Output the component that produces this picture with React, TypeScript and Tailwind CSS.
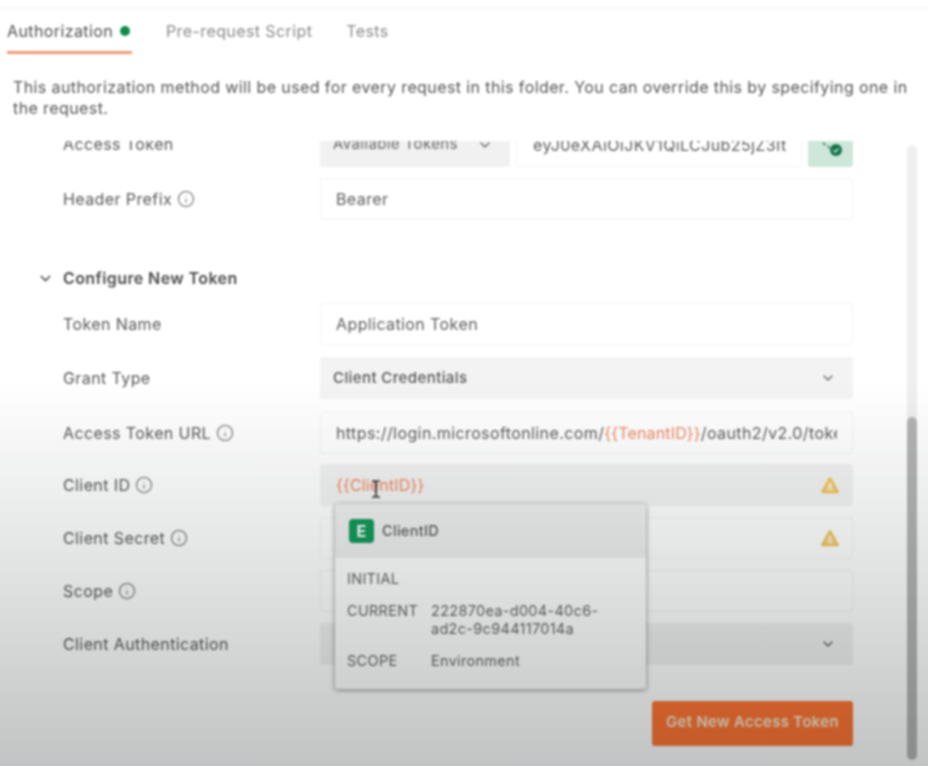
import { ChevronDown, Info } from "lucide-react";
import type { ReactNode } from "react";

const field = "h-full flex items-center rounded-[3px] border border-[#f3f3f3] pl-[15px] pr-4 text-[#5c5c5c] min-w-0";

const InfoIcon = () => <Info size={18} strokeWidth={1.4} className="text-[#666] shrink-0" />;

const Warn = () => (
  <svg width="20" height="19" viewBox="0 0 20 19" className="shrink-0">
    <path d="M10 2.5 L17.5 16 H2.5 Z" fill="#f0dc9c" stroke="#f2c158" strokeWidth="2.6" strokeLinejoin="round" />
    <rect x="9.1" y="6.5" width="1.8" height="5" fill="#fff8e4" />
    <rect x="9.1" y="12.6" width="1.8" height="1.8" fill="#fff8e4" />
  </svg>
);

const Row = ({ label, info, top, children }: { label: string; info?: boolean; top: string; children: ReactNode }) => (
  <div className={`flex h-[42px] items-center ${top}`}>
    <div className="w-[320px] pl-[63px] shrink-0 flex items-center gap-[5px] text-[#585858]">
      {label}
      {info && <InfoIcon />}
    </div>
    <div className="w-[533px] h-full">{children}</div>
  </div>
);

export default function App() {
  return (
    <div className="relative w-[928px] h-[766px] overflow-hidden bg-white font-['Inter',sans-serif] text-[16px] tracking-[0.4px]">
      <div className="h-full blur-[0.8px]">
        <div className="h-[9px] border-b border-[#f2f2f2]" />
        <div className="flex h-[44px] pl-[7px] pt-[13px] items-start leading-[19px]">
          <div className="w-[125px] h-[32px] border-b-[3px] border-[#ee9a75] flex items-start gap-[7px] text-[#505050] whitespace-nowrap">
            Authorization
            <span className="w-[10px] h-[10px] rounded-full bg-[#0f8a4c] mt-[4px] shrink-0" />
          </div>
          <span className="ml-[34px] text-[#8a8a8a]">Pre-request Script</span>
          <span className="ml-[34px] text-[#8a8a8a]">Tests</span>
        </div>
        <p className="pl-[13px] pr-[16px] pt-[24px] h-[88px] leading-[21px] text-[#555] tracking-[0.4px]">
          This authorization method will be used for every request in this folder. You can override this by specifying one in the request.
        </p>

        <div className="flex h-[625px]">
          <div className="w-[907px] overflow-hidden">
            <div className="-mt-[16px]">
              <div className="flex h-[42px] items-center">
                <div className="w-[320px] pl-[63px] pb-[4px] shrink-0 text-[#585858]">Access Token</div>
                <div className="w-[190px] h-full flex items-center justify-between rounded-[3px] bg-[#f1f1f1] pl-[13px] pr-[17px] pb-[3px] text-[15px] text-[#666]">
                  Available Tokens
                  <ChevronDown size={16} className="text-[#666]" />
                </div>
                <div className={`${field} w-[286px] ml-[6px] !pl-[16px] !pr-0 pb-[3px] overflow-hidden whitespace-nowrap`}>
                  eyJ0eXAiOiJKV1QiLCJub25jZ3It
                </div>
                <div className="w-[45px] h-full ml-[6px] rounded-[3px] bg-[#cfe6da] flex items-center justify-center">
                  <svg width="24" height="24" viewBox="0 0 24 24" className="mt-[2px] ml-[5px]">
                    <path d="M2 8 L4.5 10 M6.5 11 L9 13" stroke="#1c7a50" strokeWidth="1.6" />
                    <circle cx="15" cy="15" r="6" fill="#12734a" />
                    <path d="M12.5 15 L14.5 17 L17.6 13.4" fill="none" stroke="#cfe6da" strokeWidth="1.4" />
                  </svg>
                </div>
              </div>

              <Row label="Header Prefix" info top="mt-[11px]">
                <div className={field}>Bearer</div>
              </Row>

              <div className="flex items-center h-[24px] mt-[46px] pl-[37px] gap-[9px] font-semibold text-[#4a4a4a]">
                <ChevronDown size={17} className="text-[#555]" />
                Configure New Token
              </div>

              <Row label="Token Name" top="mt-[13px]">
                <div className={field}>Application Token</div>
              </Row>
              <Row label="Grant Type" top="mt-[12px]">
                <div className="h-full flex items-center justify-between rounded-[3px] bg-[#f3f3f3] pl-[13px] pr-[17px] text-[15px] font-medium text-[#555]">
                  Client Credentials
                  <ChevronDown size={16} className="text-[#666]" />
                </div>
              </Row>
              <Row label="Access Token URL" info top="mt-[13px]">
                <div className={`${field} !pr-[15px]`}>
                  <div className="overflow-hidden whitespace-nowrap">
                    https://login.microsoftonline.com/
                    <span className="text-[#ee8a66] tracking-[0.15px]">{"{{TenantID}}"}</span>
                    /oauth2/v2.0/token
                  </div>
                </div>
              </Row>
              <Row label="Client ID" info top="mt-[10px]">
                <div className={`${field} !bg-[#f3f3f3] justify-between !pr-[12px]`}>
                  <span className="text-[#ee8a66] tracking-[0.15px]">{"{{ClientID}}"}</span>
                  <Warn />
                </div>
              </Row>
              <Row label="Client Secret" info top="mt-[11px]">
                <div className={`${field} justify-end !pr-[12px]`}>
                  <Warn />
                </div>
              </Row>
              <Row label="Scope" info top="mt-[11px]">
                <div className={field} />
              </Row>
              <Row label="Client Authentication" top="mt-[11px]">
                <div className="h-full flex items-center justify-end rounded-[3px] bg-[#f1f1f1] pr-[17px]">
                  <ChevronDown size={16} className="text-[#555]" />
                </div>
              </Row>

              <div className="flex justify-end w-[853px] mt-[36px]">
                <button className="w-[201px] h-[45px] pb-[2px] rounded-[3px] bg-[#ff6c26] text-[#fbe3cc] font-semibold text-[15px] tracking-[0.3px] opacity-95">
                  Get New Access Token
                </button>
              </div>
            </div>
          </div>

          <div className="w-[10px] mt-[4px] h-[615px] rounded-full bg-[#efefef] flex flex-col justify-end">
            <div className="h-[343px] rounded-full bg-[#b4b4b4]" />
          </div>
        </div>

        {/* variable popover */}
        <div className="absolute left-[335px] top-[504px] w-[311px] h-[185px] rounded-[3px] bg-white shadow-[0_1px_5px_rgba(0,0,0,0.45)] text-[14.5px] tracking-[0.3px] text-[#666]">
          <div className="h-[54px] bg-[#efefef] flex items-center pl-[14px] gap-[8px] rounded-t-[3px]">
            <span className="w-[25px] h-[24px] rounded-[4px] bg-[#12995a] text-white font-bold text-[16px] flex items-center justify-center">E</span>
            <span className="font-medium text-[#5c5c5c]">ClientID</span>
          </div>
          <div className="grid grid-cols-[84px_1fr] pl-[12px] pr-[20px] pt-[12px] leading-[18px] gap-y-[14px]">
            <span>INITIAL</span>
            <span />
            <span>CURRENT</span>
            <span className="break-all">222870ea-d004-40c6-<br />ad2c-9c944117014a</span>
            <span>SCOPE</span>
            <span>Environment</span>
          </div>
        </div>

        {/* text cursor over the field */}
        <svg className="absolute left-[370px] top-[479px]" width="12" height="20" viewBox="0 0 12 20">
          <path d="M2 2 H5 L6 3 L7 2 H10 M6 3 V17 M2 18 H5 L6 17 L7 18 H10" fill="none" stroke="#333" strokeWidth="1.7" />
        </svg>
      </div>

      {/* video fade */}
      <div className="absolute inset-0 pointer-events-none bg-linear-to-b from-transparent from-[50%] to-[#0a1414]/25" />
    </div>
  );
}
